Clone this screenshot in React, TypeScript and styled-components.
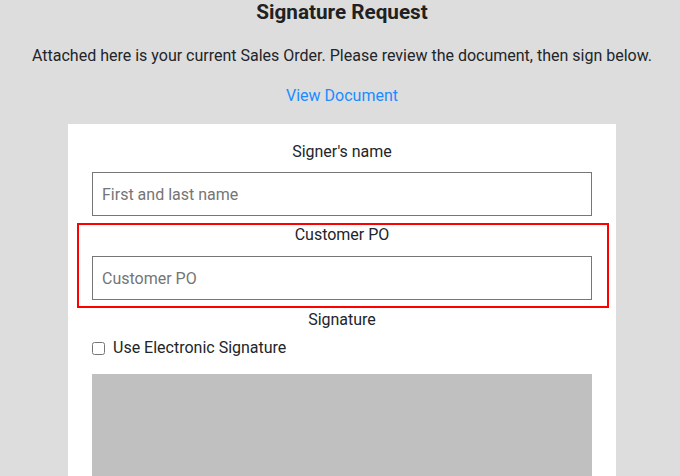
import React from "react";
import styled, { createGlobalStyle } from "styled-components";

const Global = createGlobalStyle`
  html, body { margin: 0; padding: 0; background: #dddddd; }
  body { font-family: Roboto, "Noto Sans", sans-serif; color: #212529; }
  * { box-sizing: border-box; }
`;

const Page = styled.div`
  display: flex;
  flex-direction: column;
  align-items: center;
  height: 476px;
  overflow: hidden;
  padding-left: 4px;
  background: #dddddd;
`;

const Title = styled.h1`
  margin: 0;
  font-size: 20.7px;
  font-weight: 700;
  line-height: 24px;
  color: #212121;
`;

const Intro = styled.p`
  margin: 20px 0 0;
  font-size: 16px;
  line-height: 24px;
`;

const DocLink = styled.a`
  margin-top: 16px;
  font-size: 16px;
  line-height: 24px;
  color: #1a8cff;
  text-decoration: none;
`;

const Card = styled.div`
  margin-top: 16px;
  width: 548px;
  flex-shrink: 0;
  background: #ffffff;
  padding: 16px 24px 0;
  display: flex;
  flex-direction: column;
`;

const Group = styled.div<{ $highlight?: boolean }>`
  display: flex;
  flex-direction: column;
  margin-bottom: ${(p) => (p.$highlight ? "0" : "7px")};
  ${(p) =>
    p.$highlight &&
    `
    border: 2px solid #ff0000;
    margin: 0 -17px 0 -15px;
    padding: 0 15px 6px 13px;
  `}
`;

const Label = styled.label<{ $tight?: boolean }>`
  text-align: center;
  font-size: 16px;
  line-height: ${(p) => (p.$tight ? "20px" : "24px")};
  margin-bottom: ${(p) => (p.$tight ? "11px" : "8px")};
`;

const Input = styled.input`
  width: 500px;
  height: 44px;
  border: 1px solid #767676;
  border-radius: 0;
  padding: 0 9px;
  font-family: Roboto, "Noto Sans", sans-serif;
  font-size: 16px;
  color: #212529;
  &::placeholder { color: #757575; }
`;

const SectionLabel = styled.div`
  text-align: center;
  font-size: 16px;
  line-height: 24px;
`;

const CheckRow = styled.label`
  display: flex;
  align-items: center;
  gap: 8px;
  margin-top: 4px;
  font-size: 16px;
  line-height: 24px;
`;

const Check = styled.input`
  margin: 0;
  width: 13px;
  height: 13px;
`;

const SignPad = styled.div`
  margin-top: 14px;
  width: 500px;
  height: 200px;
  flex-shrink: 0;
  background: #c0c0c0;
`;

export default function App() {
  return (
    <>
      <Global />
      <Page>
        <Title>Signature Request</Title>
        <Intro>
          Attached here is your current Sales Order. Please review the document, then sign below.
        </Intro>
        <DocLink href="#">View Document</DocLink>
        <Card>
          <Group>
            <Label>Signer's name</Label>
            <Input placeholder="First and last name" />
          </Group>
          <Group $highlight>
            <Label $tight>Customer PO</Label>
            <Input placeholder="Customer PO" />
          </Group>
          <SectionLabel>Signature</SectionLabel>
          <CheckRow>
            <Check type="checkbox" />
            Use Electronic Signature
          </CheckRow>
          <SignPad />
        </Card>
      </Page>
    </>
  );
}
